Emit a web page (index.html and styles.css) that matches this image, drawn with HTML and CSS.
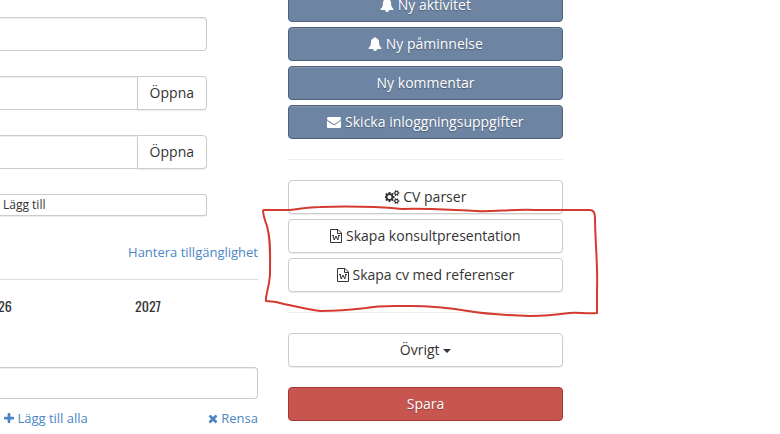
FILE: index.html
```html
<!DOCTYPE html>
<html lang="sv">
<head>
  <meta charset="UTF-8">
  <title>Konsult</title>
  <link rel="stylesheet" href="styles.css">
</head>
<body>
  <svg class="sprite" aria-hidden="true">
    <symbol id="bell" viewBox="0 0 1792 1792"><path d="M912 1696q0-16-16-16-59 0-101.500-42.500t-42.500-101.500q0-16-16-16t-16 16q0 73 51.500 124.500t124.500 51.500q16 0 16-16zm816-288q0 52-38 90t-90 38h-448q0 106-75 181t-181 75-181-75-75-181h-448q-52 0-90-38t-38-90q50-42 91-88t85-119.500 74.500-158.500 50-206 19.500-260q0-152 117-282.500t307-158.500q-8-19-8-39 0-40 28-68t68-28 68 28 28 68q0 20-8 39 190 28 307 158.500t117 282.500q0 139 19.500 260t50 206 74.500 158.500 85 119.500 91 88z"/></symbol>
    <symbol id="envelope" viewBox="0 0 1792 1792"><path d="M1792 710v794q0 66-47 113t-113 47h-1472q-66 0-113-47t-47-113v-794q44 49 101 87 362 246 497 345 57 42 92.500 65.500t94.500 48 110 24.500h2q51 0 110-24.500t94.500-48 92.500-65.500q170-123 498-345 57-39 100-87zm0-294q0 79-49 151t-122 123q-376 261-468 325-10 7-42.500 31t-54 38.500-52 32.500-57.500 27-50 9h-2q-23 0-50-9t-57.500-27-52-32.500-54-38.500-42.500-31q-91-64-262-182.500t-205-142.500q-62-42-117-115.500t-55-136.500q0-78 41.500-130t118.500-52h1472q65 0 112.500 47t47.500 113z"/></symbol>
    <symbol id="cogs" viewBox="0 0 1920 1792"><path d="M832 896q0-106-75-181t-181-75-181 75-75 181 75 181 181 75 181-75 75-181zm768 512q0-52-38-90t-90-38-90 38-38 90q0 53 37.500 90.500t90.500 37.500 90.500-37.500 37.500-90.500zm0-1024q0-52-38-90t-90-38-90 38-38 90q0 53 37.500 90.500t90.500 37.500 90.500-37.500 37.500-90.500zm-384 421v185q0 10-7 19.500t-16 10.500l-155 24q-11 35-32 76 34 48 90 115 7 11 7 20 0 12-7 19-23 30-82.500 89.500t-78.500 59.500q-11 0-21-7l-115-90q-37 19-77 31-11 108-23 155-7 24-30 24h-186q-11 0-20-7.500t-10-17.500l-23-153q-34-10-75-31l-118 89q-7 7-20 7-11 0-21-8-144-133-144-160 0-9 7-19 10-14 41-53t47-61q-23-44-35-82l-152-24q-10-1-17-9.500t-7-19.500v-185q0-10 7-19.500t16-10.500l155-24q11-35 32-76-34-48-90-115-7-11-7-20 0-12 7-20 22-30 82-89t79-59q11 0 21 7l115 90q34-18 77-32 11-108 23-154 7-24 30-24h186q11 0 20 7.500t10 17.500l23 153q34 10 75 31l118-89q8-7 20-7 11 0 21 8 144 133 144 160 0 8-7 19-12 16-42 54t-45 60q23 48 34 82l152 23q10 2 17 10.500t7 19.500zm640 533v140q0 16-149 31-12 27-30 52 51 113 51 138 0 4-4 7-122 71-124 71-8 0-46-47t-52-68q-20 2-30 2t-30-2q-14 21-52 68t-46 47q-2 0-124-71-4-3-4-7 0-25 51-138-18-25-30-52-149-15-149-31v-140q0-16 149-31 13-29 30-52-51-113-51-138 0-4 4-7 4-2 35-20t59-34 30-16q8 0 46 46.500t52 67.500q20-2 30-2t30 2q51-71 92-112l6-2q4 0 124 70 4 3 4 7 0 25-51 138 17 23 30 52 149 15 149 31zm0-1024v140q0 16-149 31-12 27-30 52 51 113 51 138 0 4-4 7-122 71-124 71-8 0-46-47t-52-68q-20 2-30 2t-30-2q-14 21-52 68t-46 47q-2 0-124-71-4-3-4-7 0-25 51-138-18-25-30-52-149-15-149-31v-140q0-16 149-31 13-29 30-52-51-113-51-138 0-4 4-7 4-2 35-20t59-34 30-16q8 0 46 46.500t52 67.500q20-2 30-2t30 2q51-71 92-112l6-2q4 0 124 70 4 3 4 7 0 25-51 138 17 23 30 52 149 15 149 31z"/></symbol>
    <symbol id="word" viewBox="0 0 12 14"><path d="M.5.5h7.500l3.500 3.500v9.500h-11zM7.500.5v4h4M2 6.500h2M8 6.500h2M3 6.500l1.200 4.500 1.800-4 1.800 4 1.200-4.500" fill="none" stroke="currentColor"/></symbol>
    <symbol id="plus" viewBox="192 0 1408 1792"><path d="M1600 736v192q0 40-28 68t-68 28h-416v416q0 40-28 68t-68 28h-192q-40 0-68-28t-28-68v-416h-416q-40 0-68-28t-28-68v-192q0-40 28-68t68-28h416v-416q0-40 28-68t68-28h192q40 0 68 28t28 68v416h416q40 0 68 28t28 68z"/></symbol>
    <symbol id="times" viewBox="192 0 1408 1792"><path d="M1490 1322q0 40-28 68l-136 136q-28 28-68 28t-68-28l-294-294-294 294q-28 28-68 28t-68-28l-136-136q-28-28-28-68t28-68l294-294-294-294q-28-28-28-68t28-68l136-136q28-28 68-28t68 28l294 294 294-294q28-28 68-28t68 28l136 136q28 28 28 68t-28 68l-294 294 294 294q28 28 28 68z"/></symbol>
  </svg>

  <div class="page">
    <main class="main">
      <form class="fields">
        <input type="text" class="form-control" aria-label="Namn">
        <div class="input-group">
          <input type="text" class="form-control" aria-label="Länk 1">
          <button type="button" class="btn btn-default">Öppna</button>
        </div>
        <div class="input-group">
          <input type="text" class="form-control" aria-label="Länk 2">
          <button type="button" class="btn btn-default">Öppna</button>
        </div>
        <button type="button" class="btn btn-default btn-xs">Lägg till</button>
      </form>

      <div class="availability">
        <a href="#">Hantera tillgänglighet</a>
      </div>
      <div class="years">
        <span>2026</span>
        <span>2027</span>
      </div>

      <input type="text" class="form-control tags" aria-label="Taggar">
      <div class="tag-links">
        <a href="#"><svg class="icon icon-sm"><use href="#plus"/></svg> Lägg till alla</a>
        <a href="#"><svg class="icon icon-sm"><use href="#times"/></svg> Rensa</a>
      </div>
    </main>

    <aside class="sidebar">
      <div class="btn-stack">
        <button type="button" class="btn btn-primary"><svg class="icon"><use href="#bell"/></svg> Ny aktivitet</button>
        <button type="button" class="btn btn-primary"><svg class="icon"><use href="#bell"/></svg> Ny påminnelse</button>
        <button type="button" class="btn btn-primary">Ny kommentar</button>
        <button type="button" class="btn btn-primary"><svg class="icon"><use href="#envelope"/></svg> Skicka inloggningsuppgifter</button>
      </div>
      <hr>
      <div class="btn-stack">
        <button type="button" class="btn btn-default"><svg class="icon icon-cogs"><use href="#cogs"/></svg> CV parser</button>
        <div class="btn-stack marked">
          <button type="button" class="btn btn-default"><svg class="icon icon-word"><use href="#word"/></svg> Skapa konsultpresentation</button>
          <button type="button" class="btn btn-default"><svg class="icon icon-word"><use href="#word"/></svg> Skapa cv med referenser</button>
          <svg class="marker" viewBox="260 203 340 117" preserveAspectRatio="none" aria-hidden="true">
            <path d="M263 210H290C300 209 308 207 320 207C350 206 380 207 402 209C425 208 450 210 476 211C495 212 510 209 535 210H590Q595 210 595 218C595 240 598 265 597 290V313C585 314 579 312 569 313C555 315 546 316 530 316C500 315 485 314 468 311C450 308 430 306 410 306C395 306 380 305 366 308C350 310 342 311 320 311C305 309 295 306 284 304L276 302L266 301C265 296 269 289 270 275C270 255 271 240 267 226C264 218 263 215 263 210"/>
          </svg>
        </div>
      </div>
      <hr>
      <button type="button" class="btn btn-default">Övrigt <span class="caret"></span></button>
      <button type="submit" class="btn btn-danger">Spara</button>
    </aside>
  </div>
</body>
</html>
```

FILE: styles.css
```css
* {
  box-sizing: border-box;
}

body {
  margin: 0;
  overflow: hidden;
  font-family: "Open Sans", sans-serif;
  font-size: 14px;
  line-height: 20px;
  color: #333;
  background-color: #fff;
}

a {
  color: #4a86c5;
  text-decoration: none;
}

a:hover {
  text-decoration: underline;
}

.sprite {
  display: none;
}

.page {
  display: grid;
  grid-template-columns: 258fr 275fr 187fr;
  gap: 30px;
}

/* Form column */
.main {
  min-width: 0;
  padding-top: 17px;
}

.fields {
  display: flex;
  flex-direction: column;
  gap: 25px;
  margin-right: 51px;
}

.form-control {
  display: block;
  width: 100%;
  min-width: 0;
  height: 34px;
  padding: 6px 12px;
  font: inherit;
  color: #555;
  background-color: #fff;
  border: 1px solid #ccc;
  border-left: none;
  border-radius: 0 4px 4px 0;
  box-shadow: inset 0 1px 1px rgba(0, 0, 0, 0.075);
}

.input-group {
  display: flex;
}

.input-group .form-control {
  flex: 1;
  border-right: none;
  border-radius: 0;
}

.input-group .btn {
  width: auto;
  border-radius: 0 4px 4px 0;
}

.availability {
  margin-top: 26px;
  padding-bottom: 17px;
  border-bottom: 1px solid #ddd;
  font-size: 13px;
  text-align: right;
}

.years {
  display: grid;
  grid-template-columns: 1fr 1fr;
  margin: 16px 35px 0 -77px;
  font-family: "Oswald", "Liberation Sans Narrow", "Roboto Condensed", sans-serif;
  text-align: center;
}

.tags {
  height: 32px;
  margin-top: 51px;
}

.tag-links {
  display: flex;
  justify-content: space-between;
  margin-top: 9px;
  padding-left: 4px;
  font-size: 13px;
}

/* Buttons */
.btn {
  display: block;
  width: 100%;
  padding: 6px 12px;
  font: inherit;
  text-align: center;
  white-space: nowrap;
  border: 1px solid transparent;
  border-radius: 4px;
  cursor: pointer;
}

.btn-default {
  color: #333;
  background-color: #fff;
  border-color: #ccc;
  box-shadow: 0 1px 1px rgba(0, 0, 0, 0.08);
}

.btn-primary {
  color: #fff;
  background-color: #6d84a3;
  border-color: #4d617c;
  box-shadow: inset 0 1px 0 rgba(255, 255, 255, 0.15);
  text-shadow: 0 1px 1px rgba(0, 0, 0, 0.3);
}

.btn-danger {
  color: #fff;
  background-color: #c75550;
  border-color: #a33631;
  text-shadow: 0 1px 1px rgba(0, 0, 0, 0.3);
}

.btn-xs {
  padding: 0 3px;
  font-size: 12px;
  text-align: left;
  border-left: none;
  border-radius: 0 3px 3px 0;
}

.icon {
  width: 14px;
  height: 14px;
  fill: currentColor;
  vertical-align: -2px;
}

.icon-cogs {
  width: 15px;
}

.icon-word {
  width: 12px;
}

.icon-sm {
  width: 10px;
  height: 13px;
}

.caret {
  display: inline-block;
  border-top: 4px solid;
  border-right: 4px solid transparent;
  border-left: 4px solid transparent;
  vertical-align: middle;
}

/* Action column */
.sidebar {
  min-width: 0;
  margin-top: -12px;
}

.btn-stack {
  display: flex;
  flex-direction: column;
  gap: 5px;
}

.sidebar hr {
  margin: 20px 0;
  border: 0;
  border-top: 1px solid #eee;
}

.btn-danger {
  margin-top: 20px;
}

/* Hand-drawn ring round the document buttons */
.marked {
  position: relative;
}

.marker {
  position: absolute;
  top: -16px;
  left: -28px;
  width: calc(100% + 65px);
  height: 117px;
  fill: none;
  stroke: #d43a2f;
  stroke-width: 2;
  stroke-linejoin: round;
  pointer-events: none;
}
```
